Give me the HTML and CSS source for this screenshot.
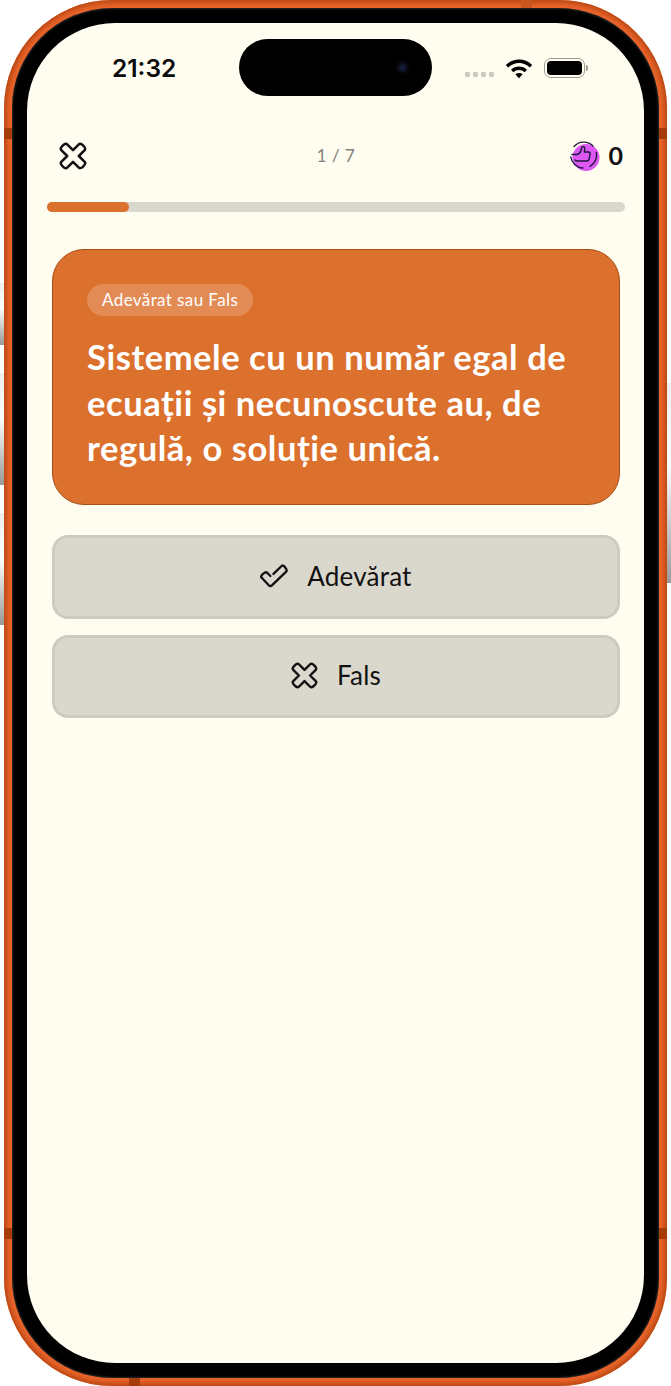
FILE: index.html
```html
<!DOCTYPE html>
<html lang="ro">
<head>
  <meta charset="UTF-8">
  <title>Adevărat sau Fals</title>
  <meta name="viewport" content="width=device-width,initial-scale=1">
  <link rel="stylesheet" href="styles.css">
</head>
<body>
  <svg class="defs" width="0" height="0">
    <symbol id="iconX" viewBox="2.500 2.500 19 19">
      <path transform="rotate(45 12 12)" d="M9.200 3.600c0-2 5.600-2 5.600 0v5.600h5.600c2 0 2 5.600 0 5.600h-5.600v5.600c0 2-5.600 2-5.600 0v-5.600H3.600c-2 0-2-5.600 0-5.600h5.600z" fill="none" stroke="currentColor" stroke-width="1.700" stroke-linejoin="round"/>
    </symbol>
    <symbol id="iconCheck" viewBox="1 3 27 22">
      <path d="M11 14l-3.500-3.500c-1.200-1.200-6.500 3.500-5.300 4.800l7.300 7.700c1 1 2 1 3 0L26.500 9.500c1.200-1.200-3-6.800-4.400-5.400L14 12" fill="none" stroke="currentColor" stroke-width="2.200" stroke-linecap="round" stroke-linejoin="round"/>
    </symbol>
  </svg>

  <div class="phone">
    <span class="side-btn btn-a"></span>
    <span class="side-btn btn-b"></span>
    <span class="side-btn btn-c"></span>
    <span class="side-btn btn-d"></span>
    <span class="tick tick-lt"></span>
    <span class="tick tick-rt"></span>
    <span class="tick tick-lb"></span>
    <span class="tick tick-rb"></span>
    <span class="tick-h tick-top"></span>
    <span class="tick-h tick-bottom"></span>

    <div class="bezel">
      <div class="screen">
        <div class="notch"><span class="lens"></span></div>

        <div class="status">
          <span class="time">21:32</span>
          <div class="status-icons">
            <div class="signal"><i></i><i></i><i></i><i></i></div>
            <svg class="wifi" width="28" height="21" viewBox="0 0 28 21">
              <path d="M2 8.200C9 1.500 19 1.500 26 8.200" fill="none" stroke="#000" stroke-width="3.400"/>
              <path d="M7.200 13C11 9.400 17 9.400 20.800 13" fill="none" stroke="#000" stroke-width="3.400"/>
              <path d="M10.300 16.300c2.200-1.900 5.200-1.900 7.400 0L14 20.300z" fill="#000"/>
            </svg>
            <div class="battery"><div class="battery-fill"></div></div>
            <span class="battery-cap"></span>
          </div>
        </div>

        <div class="quiz-head">
          <svg class="icon-close"><use href="#iconX"/></svg>
          <span class="counter">1 / 7</span>
          <div class="score">
            <svg class="icon-like" width="30" height="32" viewBox="0 0 30 32">
              <circle cx="16" cy="17.500" r="13.500" fill="#dd57f2"/>
              <path d="M4 6.500A13 13 0 0 1 23 6M26.400 12.500A13 13 0 0 1 20 26.300M13 28A13 13 0 0 1 .8 17" fill="none" stroke="#1d1a3f" stroke-width="1.400" stroke-linecap="round"/>
              <path d="M2 14.500h5c2-.5 3.500-2 4-4l.8-3c.5-1.500 3-1 3 1l-.5 3.500h4c1.500 0 2 1 1.700 2.200l-1 5.300c-.2 1-1 1.500-2 1.500H7c-1 0-1.500-.5-2-1" fill="none" stroke="#1d1a3f" stroke-width="1.400" stroke-linecap="round" stroke-linejoin="round"/>
            </svg>
            <span class="score-num">0</span>
          </div>
        </div>

        <div class="progress"><div class="progress-fill"></div></div>

        <div class="quiz-body">
          <div class="question">
            <span class="pill">Adevărat sau Fals</span>
            <h1>Sistemele cu un număr egal de ecuații și necunoscute au, de regulă, o soluție unică.</h1>
          </div>
          <button class="answer"><svg class="icon-check"><use href="#iconCheck"/></svg>Adevărat</button>
          <button class="answer"><svg class="icon-x"><use href="#iconX"/></svg>Fals</button>
        </div>
      </div>
    </div>
  </div>
</body>
</html>
```
FILE: styles.css
```css
* { box-sizing: border-box; }
body { margin: 0; background: #fff; font-family: 'Lato', 'Noto Sans', Arial, sans-serif; color: #111; }
.defs { display: block; height: 0; }

/* telefon */
.phone { position: relative; width: 663px; height: 1386px; margin-left: 4px; padding: 8px; border-radius: 108px;
  background: #ec662c; box-shadow: inset 0 0 6px 2px #a93d0a; }
.bezel { height: 100%; padding: 15px; border-radius: 100px; background: #000; box-shadow: inset 0 0 3px #555; }
.screen { position: relative; height: 100%; border-radius: 88px; background: #fffdf0; overflow: hidden; }
.side-btn { position: absolute; width: 4px; background: linear-gradient(180deg, #eee, #fff 40%, #999); }
.btn-a { left: -4px; top: 283px; height: 62px; }
.btn-b { left: -4px; top: 373px; height: 112px; }
.btn-c { left: -4px; top: 513px; height: 112px; }
.btn-d { right: -4px; top: 383px; height: 200px; }
.tick { position: absolute; width: 8px; height: 11px; background: #a63c0a; }
.tick-lt { left: 0; top: 128px; }
.tick-rt { right: 0; top: 128px; }
.tick-lb { left: 0; top: 1228px; }
.tick-rb { right: 0; top: 1228px; }
.tick-h { position: absolute; width: 11px; height: 8px; background: #a63c0a; }
.tick-top { left: 517px; top: 0; background: #c9551f; }
.tick-bottom { left: 125px; bottom: 0; }
.notch { position: absolute; left: 212px; top: 16px; width: 193px; height: 57px; border-radius: 29px; background: #000; }
.lens { position: absolute; left: 156px; top: 21px; width: 15px; height: 15px; border-radius: 50%; background: radial-gradient(circle, #141a38 15%, #07080f 50%, #000 75%); }

/* status bar */
.status { display: flex; justify-content: space-between; align-items: center; height: 90px; padding: 0 56px 0 85px; }
.time { font-family: 'Inter', sans-serif; font-size: 24.500px; font-weight: 600; color: #0a0a0a; }
.status-icons { display: flex; align-items: center; }
.signal { display: flex; gap: 3px; margin-right: 11px; margin-top: 12px; }
.signal i { display: block; width: 5px; height: 5px; border-radius: 1.500px; background: #ccc9bf; }
.wifi { margin-right: 11px; }
.battery { width: 41px; height: 20px; padding: 2px; border: 1.500px solid #9c9a90; border-radius: 7px; }
.battery-fill { height: 100%; border-radius: 4px; background: #000; }
.battery-cap { width: 2px; height: 6px; margin-left: 1px; border-radius: 0 2px 2px 0; background: #9c9a90; }

/* header soal */
.quiz-head { display: flex; justify-content: space-between; align-items: center; height: 46px; margin-top: 20px; padding: 0 21px 0 32px; }
.icon-close { width: 28px; height: 28px; color: #111; }
.counter { margin: 0 0 2px 14px; font-size: 17.500px; color: #85837b; letter-spacing: .3px; }
.score { display: flex; align-items: center; gap: 8px; }
.score-num { margin-bottom: 2px; font-size: 25px; font-weight: 700; }
.progress { height: 10px; margin: 23px 19px 0 20px; border-radius: 5px; background: #dad7cf; }
.progress-fill { width: 82px; height: 100%; border-radius: 5px; background: #dc702d; }

.quiz-body { display: flex; flex-direction: column; gap: 16px; margin: 37px 24px 0 25px; }
.question { min-height: 256px; margin-bottom: 14px; padding: 34px 34px 0; border: 1px solid #a84e17; border-radius: 32px; background: #dc702d; color: #fff; }
.pill { display: inline-block; height: 32px; padding: 0 15px; border-radius: 16px; background: #e38b55; font-size: 17px; letter-spacing: .4px; line-height: 32px; }
h1 { margin: 18px 0 0; font-size: 34.500px; font-weight: 700; letter-spacing: .55px; line-height: 45.500px; }
.answer { display: flex; justify-content: center; align-items: center; gap: 19px; height: 83.500px; padding-bottom: 3px; border: 3px solid #cdcbc0; border-radius: 16px; background: #dad7cd; color: #111; font-family: inherit; font-size: 26px; letter-spacing: .2px; cursor: pointer; }
.icon-check { width: 28px; height: 26px; }
.icon-x { width: 27px; height: 27px; }
```
